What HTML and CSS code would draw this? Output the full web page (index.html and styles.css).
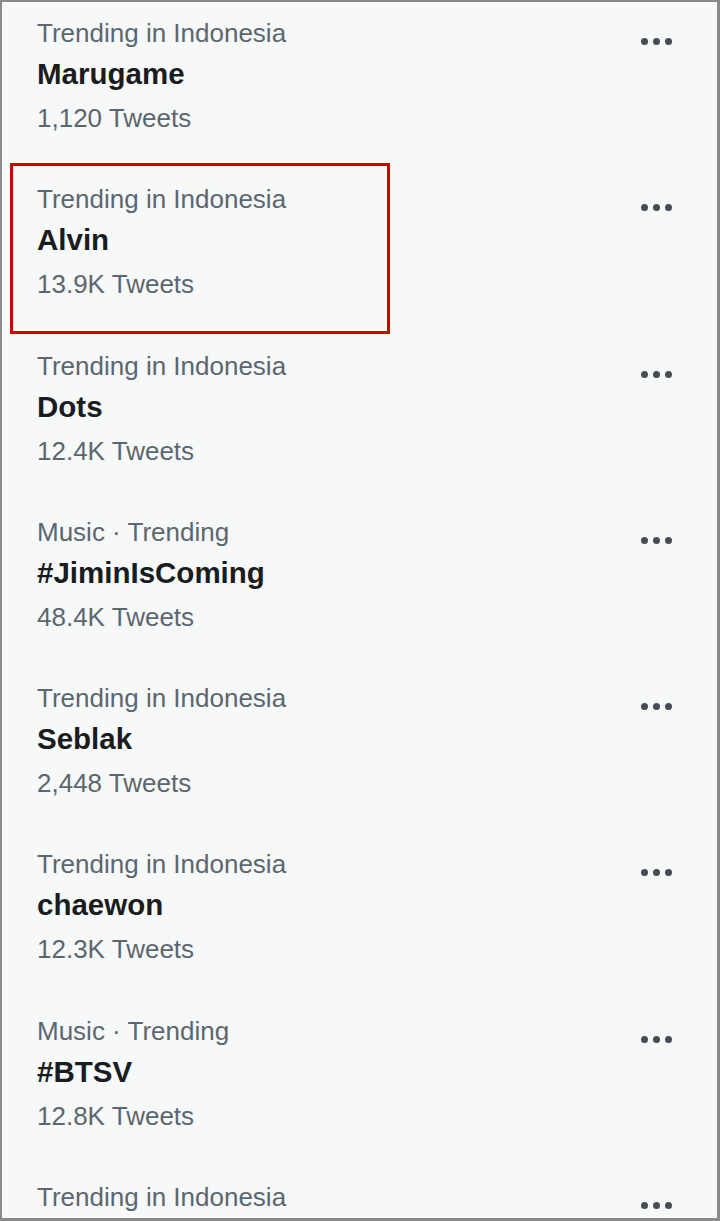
FILE: index.html
```html
<!DOCTYPE html>
<html>
<head>
<meta charset="utf-8">
<link rel="stylesheet" href="styles.css">
</head>
<body>
<div class="panel">
  <div class="trend">
    <div class="text">
      <div class="cat">Trending in Indonesia</div>
      <div class="name">Marugame</div>
      <div class="count">1,120 Tweets</div>
    </div>
    <div class="more"><span></span><span></span><span></span></div>
  </div>
  <div class="trend">
    <div class="highlight"></div>
    <div class="text">
      <div class="cat">Trending in Indonesia</div>
      <div class="name">Alvin</div>
      <div class="count">13.9K Tweets</div>
    </div>
    <div class="more"><span></span><span></span><span></span></div>
  </div>
  <div class="trend">
    <div class="text">
      <div class="cat">Trending in Indonesia</div>
      <div class="name">Dots</div>
      <div class="count">12.4K Tweets</div>
    </div>
    <div class="more"><span></span><span></span><span></span></div>
  </div>
  <div class="trend">
    <div class="text">
      <div class="cat">Music · Trending</div>
      <div class="name">#JiminIsComing</div>
      <div class="count">48.4K Tweets</div>
    </div>
    <div class="more"><span></span><span></span><span></span></div>
  </div>
  <div class="trend">
    <div class="text">
      <div class="cat">Trending in Indonesia</div>
      <div class="name">Seblak</div>
      <div class="count">2,448 Tweets</div>
    </div>
    <div class="more"><span></span><span></span><span></span></div>
  </div>
  <div class="trend">
    <div class="text">
      <div class="cat">Trending in Indonesia</div>
      <div class="name">chaewon</div>
      <div class="count">12.3K Tweets</div>
    </div>
    <div class="more"><span></span><span></span><span></span></div>
  </div>
  <div class="trend">
    <div class="text">
      <div class="cat">Music · Trending</div>
      <div class="name">#BTSV</div>
      <div class="count">12.8K Tweets</div>
    </div>
    <div class="more"><span></span><span></span><span></span></div>
  </div>
  <div class="trend">
    <div class="text">
      <div class="cat">Trending in Indonesia</div>
      <div class="name">&nbsp;</div>
      <div class="count">&nbsp;</div>
    </div>
    <div class="more"><span></span><span></span><span></span></div>
  </div>
</div>
</body>
</html>
```

FILE: styles.css
```css
html, body {
  margin: 0;
  padding: 0;
}
body {
  width: 720px;
  height: 1221px;
  overflow: hidden;
  font-family: "Liberation Sans", Arial, sans-serif;
}
.panel {
  box-sizing: border-box;
  width: 720px;
  height: 1221px;
  border: 2px solid #8a8a8a;
  border-right-width: 3px;
  border-bottom-width: 3px;
  background: #f7f8f8;
  overflow: hidden;
}
.trend {
  position: relative;
  box-sizing: border-box;
  height: 166.3px;
  padding: 11px 45px 0 35px;
  display: flex;
  justify-content: space-between;
  align-items: flex-start;
}
.cat {
  font-size: 26px;
  line-height: 40px;
  color: #5b6770;
}
.name {
  font-size: 29.5px;
  font-weight: bold;
  line-height: 41px;
  color: #191c20;
}
.count {
  font-size: 26px;
  line-height: 49px;
  color: #5b6770;
}
.more {
  display: flex;
  gap: 5px;
  margin-top: 25px;
}
.more span {
  width: 7px;
  height: 7px;
  border-radius: 50%;
  background: #454c53;
}
.highlight {
  position: absolute;
  left: 8px;
  top: -5px;
  width: 374px;
  height: 165px;
  border: 3px solid #d40000;
}
```
